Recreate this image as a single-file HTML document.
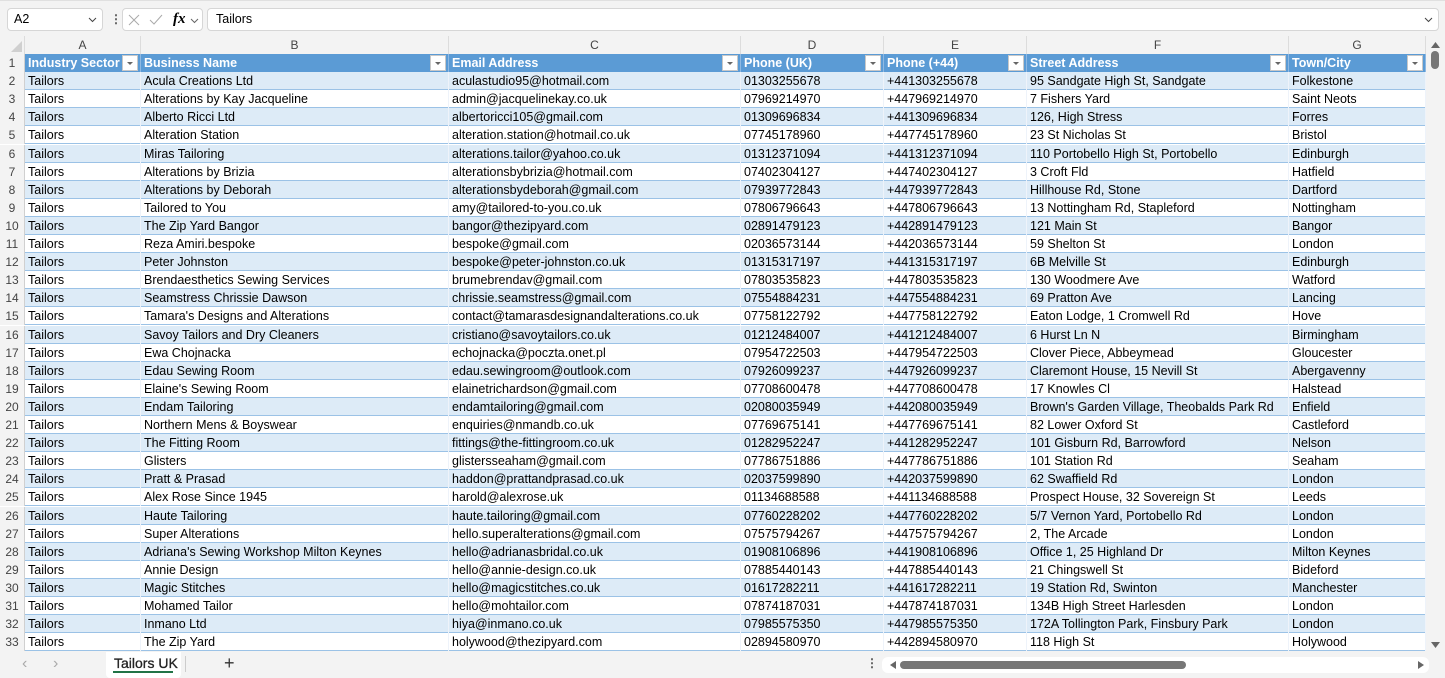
<!DOCTYPE html>
<html><head><meta charset="utf-8"><style>
*{box-sizing:border-box;margin:0;padding:0}
body{width:1445px;height:678px;overflow:hidden;background:#f3f3f3;font-family:"Liberation Sans",sans-serif;font-size:12.5px;color:#000;position:relative}
.bar{position:absolute;left:0;top:0;width:1445px;height:36px;background:#f3f3f3;border-top:1px solid #e0e0e0}
.box{position:absolute;background:#fff;border:1px solid #d6d6d6;border-radius:4px}
.colhdr{position:absolute;top:36px;left:0;width:1428px;height:18px;background:#f3f3f3}
.colhdr div{position:absolute;top:0;height:18px;text-align:center;color:#444;font-size:12px;line-height:19px;border-right:1px solid #dcdcdc}
.grid{position:absolute;left:0;top:54px;width:1426px;height:597px;background:#fff;overflow:hidden}
.r{position:absolute;left:0;width:1426px;height:18.1px;white-space:nowrap}
.r div{position:absolute;top:0;height:18.1px;line-height:19px;padding-left:3px;overflow:hidden}
.r .n{left:0;width:25px;background:#f3f3f3;color:#444;text-align:center;padding:0;font-size:12px;border-right:1px solid #d0d0d0}
.r.b{background:#ddebf7}
.r.w{background:#fff}
.r.d{border-bottom:1px solid #9bc2e6}
.r.h{background:#5b9bd5;color:#fff;font-weight:bold}
.r.h .n{font-weight:normal}
.r div.c{border-right:1px solid #eef3fa}
.r.h div.c{border-right:1px solid #8fb9e3}
.f{position:absolute;right:2px;top:1px;width:16px;height:16px;background:#fff;border:1px solid #c8c8c8}
.f:after{content:"";position:absolute;left:4px;top:6px;border-left:3px solid transparent;border-right:3px solid transparent;border-top:3px solid #666}
.A{left:25px;width:116px}.B{left:141px;width:308px}.C{left:449px;width:292px}.D{left:741px;width:143px}.E{left:884px;width:143px}.F{left:1027px;width:262px}.G{left:1289px;width:137px}
</style></head><body>
<div class="bar">
 <div class="box" style="left:7px;top:7px;width:96px;height:23px;padding:3px 0 0 6px">A2<svg style="position:absolute;right:5px;top:8px" width="9" height="6"><path d="M1 1L4.5 4.5L8 1" stroke="#444" fill="none"/></svg></div>
 <div style="position:absolute;left:110px;top:11px;color:#555;font-weight:bold;font-size:12px">⋮</div>
 <div class="box" style="left:122px;top:7px;width:81px;height:23px">
  <svg style="position:absolute;left:5px;top:5px" width="12" height="12"><path d="M1 1L11 11M11 1L1 11" stroke="#aaa"/></svg>
  <svg style="position:absolute;left:26px;top:5px" width="14" height="12"><path d="M1 6L5 10L13 1" stroke="#aaa" fill="none"/></svg>
  <i style="position:absolute;left:50px;top:2px;font-family:'Liberation Serif',serif;font-size:15px;font-weight:bold">fx</i>
  <svg style="position:absolute;left:67px;top:9px" width="9" height="6"><path d="M1 1L4.5 4.5L8 1" stroke="#666" fill="none"/></svg>
 </div>
 <div class="box" style="left:207px;top:7px;width:1232px;height:23px;padding:3px 0 0 8px">Tailors<svg style="position:absolute;right:5px;top:8px" width="9" height="6"><path d="M1 1L4.5 4.5L8 1" stroke="#444" fill="none"/></svg></div>
</div>
<div class="colhdr">
 <div style="left:0;width:25px"><svg width="25" height="18"><path d="M22 5L22 16L11 16Z" fill="#d0d0d0"/></svg></div>
 <div style="left:25px;width:116px">A</div><div style="left:141px;width:308px">B</div><div style="left:449px;width:292px">C</div><div style="left:741px;width:143px">D</div><div style="left:884px;width:143px">E</div><div style="left:1027px;width:262px">F</div><div style="left:1289px;width:137px">G</div>
</div>
<div class="grid">
<div class="r h" style="top:0"><div class="n">1</div><div class="c A">Industry Sector<span class="f"></span></div><div class="c B">Business Name<span class="f"></span></div><div class="c C">Email Address<span class="f"></span></div><div class="c D">Phone (UK)<span class="f"></span></div><div class="c E">Phone (+44)<span class="f"></span></div><div class="c F">Street Address<span class="f"></span></div><div class="c G">Town/City<span class="f"></span></div></div>
<div class="r b d" style="top:18px"><div class="n">2</div><div class="c A">Tailors</div><div class="c B">Acula Creations Ltd</div><div class="c C">aculastudio95@hotmail.com</div><div class="c D">01303255678</div><div class="c E">+441303255678</div><div class="c F">95 Sandgate High St, Sandgate</div><div class="c G">Folkestone</div></div>
<div class="r w d" style="top:36px"><div class="n">3</div><div class="c A">Tailors</div><div class="c B">Alterations by Kay Jacqueline</div><div class="c C">admin@jacquelinekay.co.uk</div><div class="c D">07969214970</div><div class="c E">+447969214970</div><div class="c F">7 Fishers Yard</div><div class="c G">Saint Neots</div></div>
<div class="r b d" style="top:54px"><div class="n">4</div><div class="c A">Tailors</div><div class="c B">Alberto Ricci Ltd</div><div class="c C">albertoricci105@gmail.com</div><div class="c D">01309696834</div><div class="c E">+441309696834</div><div class="c F">126, High Stress</div><div class="c G">Forres</div></div>
<div class="r w d" style="top:72px"><div class="n">5</div><div class="c A">Tailors</div><div class="c B">Alteration Station</div><div class="c C">alteration.station@hotmail.co.uk</div><div class="c D">07745178960</div><div class="c E">+447745178960</div><div class="c F">23 St Nicholas St</div><div class="c G">Bristol</div></div>
<div class="r b d" style="top:90.5px"><div class="n">6</div><div class="c A">Tailors</div><div class="c B">Miras Tailoring</div><div class="c C">alterations.tailor@yahoo.co.uk</div><div class="c D">01312371094</div><div class="c E">+441312371094</div><div class="c F">110 Portobello High St, Portobello</div><div class="c G">Edinburgh</div></div>
<div class="r w d" style="top:108.6px"><div class="n">7</div><div class="c A">Tailors</div><div class="c B">Alterations by Brizia</div><div class="c C">alterationsbybrizia@hotmail.com</div><div class="c D">07402304127</div><div class="c E">+447402304127</div><div class="c F">3 Croft Fld</div><div class="c G">Hatfield</div></div>
<div class="r b d" style="top:126.7px"><div class="n">8</div><div class="c A">Tailors</div><div class="c B">Alterations by Deborah</div><div class="c C">alterationsbydeborah@gmail.com</div><div class="c D">07939772843</div><div class="c E">+447939772843</div><div class="c F">Hillhouse Rd, Stone</div><div class="c G">Dartford</div></div>
<div class="r w d" style="top:144.8px"><div class="n">9</div><div class="c A">Tailors</div><div class="c B">Tailored to You</div><div class="c C">amy@tailored-to-you.co.uk</div><div class="c D">07806796643</div><div class="c E">+447806796643</div><div class="c F">13 Nottingham Rd, Stapleford</div><div class="c G">Nottingham</div></div>
<div class="r b d" style="top:162.9px"><div class="n">10</div><div class="c A">Tailors</div><div class="c B">The Zip Yard Bangor</div><div class="c C">bangor@thezipyard.com</div><div class="c D">02891479123</div><div class="c E">+442891479123</div><div class="c F">121 Main St</div><div class="c G">Bangor</div></div>
<div class="r w d" style="top:181px"><div class="n">11</div><div class="c A">Tailors</div><div class="c B">Reza Amiri.bespoke</div><div class="c C">bespoke@gmail.com</div><div class="c D">02036573144</div><div class="c E">+442036573144</div><div class="c F">59 Shelton St</div><div class="c G">London</div></div>
<div class="r b d" style="top:199.1px"><div class="n">12</div><div class="c A">Tailors</div><div class="c B">Peter Johnston</div><div class="c C">bespoke@peter-johnston.co.uk</div><div class="c D">01315317197</div><div class="c E">+441315317197</div><div class="c F">6B Melville St</div><div class="c G">Edinburgh</div></div>
<div class="r w d" style="top:217.2px"><div class="n">13</div><div class="c A">Tailors</div><div class="c B">Brendaesthetics Sewing Services</div><div class="c C">brumebrendav@gmail.com</div><div class="c D">07803535823</div><div class="c E">+447803535823</div><div class="c F">130 Woodmere Ave</div><div class="c G">Watford</div></div>
<div class="r b d" style="top:235.3px"><div class="n">14</div><div class="c A">Tailors</div><div class="c B">Seamstress Chrissie Dawson</div><div class="c C">chrissie.seamstress@gmail.com</div><div class="c D">07554884231</div><div class="c E">+447554884231</div><div class="c F">69 Pratton Ave</div><div class="c G">Lancing</div></div>
<div class="r w d" style="top:253.4px"><div class="n">15</div><div class="c A">Tailors</div><div class="c B">Tamara's Designs and Alterations</div><div class="c C">contact@tamarasdesignandalterations.co.uk</div><div class="c D">07758122792</div><div class="c E">+447758122792</div><div class="c F">Eaton Lodge, 1 Cromwell Rd</div><div class="c G">Hove</div></div>
<div class="r b d" style="top:271.5px"><div class="n">16</div><div class="c A">Tailors</div><div class="c B">Savoy Tailors and Dry Cleaners</div><div class="c C">cristiano@savoytailors.co.uk</div><div class="c D">01212484007</div><div class="c E">+441212484007</div><div class="c F">6 Hurst Ln N</div><div class="c G">Birmingham</div></div>
<div class="r w d" style="top:289.6px"><div class="n">17</div><div class="c A">Tailors</div><div class="c B">Ewa Chojnacka</div><div class="c C">echojnacka@poczta.onet.pl</div><div class="c D">07954722503</div><div class="c E">+447954722503</div><div class="c F">Clover Piece, Abbeymead</div><div class="c G">Gloucester</div></div>
<div class="r b d" style="top:307.7px"><div class="n">18</div><div class="c A">Tailors</div><div class="c B">Edau Sewing Room</div><div class="c C">edau.sewingroom@outlook.com</div><div class="c D">07926099237</div><div class="c E">+447926099237</div><div class="c F">Claremont House, 15 Nevill St</div><div class="c G">Abergavenny</div></div>
<div class="r w d" style="top:325.8px"><div class="n">19</div><div class="c A">Tailors</div><div class="c B">Elaine's Sewing Room</div><div class="c C">elainetrichardson@gmail.com</div><div class="c D">07708600478</div><div class="c E">+447708600478</div><div class="c F">17 Knowles Cl</div><div class="c G">Halstead</div></div>
<div class="r b d" style="top:343.9px"><div class="n">20</div><div class="c A">Tailors</div><div class="c B">Endam Tailoring</div><div class="c C">endamtailoring@gmail.com</div><div class="c D">02080035949</div><div class="c E">+442080035949</div><div class="c F">Brown's Garden Village, Theobalds Park Rd</div><div class="c G">Enfield</div></div>
<div class="r w d" style="top:362px"><div class="n">21</div><div class="c A">Tailors</div><div class="c B">Northern Mens &amp; Boyswear</div><div class="c C">enquiries@nmandb.co.uk</div><div class="c D">07769675141</div><div class="c E">+447769675141</div><div class="c F">82 Lower Oxford St</div><div class="c G">Castleford</div></div>
<div class="r b d" style="top:380.1px"><div class="n">22</div><div class="c A">Tailors</div><div class="c B">The Fitting Room</div><div class="c C">fittings@the-fittingroom.co.uk</div><div class="c D">01282952247</div><div class="c E">+441282952247</div><div class="c F">101 Gisburn Rd, Barrowford</div><div class="c G">Nelson</div></div>
<div class="r w d" style="top:398.2px"><div class="n">23</div><div class="c A">Tailors</div><div class="c B">Glisters</div><div class="c C">glistersseaham@gmail.com</div><div class="c D">07786751886</div><div class="c E">+447786751886</div><div class="c F">101 Station Rd</div><div class="c G">Seaham</div></div>
<div class="r b d" style="top:416.3px"><div class="n">24</div><div class="c A">Tailors</div><div class="c B">Pratt &amp; Prasad</div><div class="c C">haddon@prattandprasad.co.uk</div><div class="c D">02037599890</div><div class="c E">+442037599890</div><div class="c F">62 Swaffield Rd</div><div class="c G">London</div></div>
<div class="r w d" style="top:434.4px"><div class="n">25</div><div class="c A">Tailors</div><div class="c B">Alex Rose Since 1945</div><div class="c C">harold@alexrose.uk</div><div class="c D">01134688588</div><div class="c E">+441134688588</div><div class="c F">Prospect House, 32 Sovereign St</div><div class="c G">Leeds</div></div>
<div class="r b d" style="top:452.5px"><div class="n">26</div><div class="c A">Tailors</div><div class="c B">Haute Tailoring</div><div class="c C">haute.tailoring@gmail.com</div><div class="c D">07760228202</div><div class="c E">+447760228202</div><div class="c F">5/7 Vernon Yard, Portobello Rd</div><div class="c G">London</div></div>
<div class="r w d" style="top:470.6px"><div class="n">27</div><div class="c A">Tailors</div><div class="c B">Super Alterations</div><div class="c C">hello.superalterations@gmail.com</div><div class="c D">07575794267</div><div class="c E">+447575794267</div><div class="c F">2, The Arcade</div><div class="c G">London</div></div>
<div class="r b d" style="top:488.7px"><div class="n">28</div><div class="c A">Tailors</div><div class="c B">Adriana's Sewing Workshop Milton Keynes</div><div class="c C">hello@adrianasbridal.co.uk</div><div class="c D">01908106896</div><div class="c E">+441908106896</div><div class="c F">Office 1, 25 Highland Dr</div><div class="c G">Milton Keynes</div></div>
<div class="r w d" style="top:506.8px"><div class="n">29</div><div class="c A">Tailors</div><div class="c B">Annie Design</div><div class="c C">hello@annie-design.co.uk</div><div class="c D">07885440143</div><div class="c E">+447885440143</div><div class="c F">21 Chingswell St</div><div class="c G">Bideford</div></div>
<div class="r b d" style="top:524.9px"><div class="n">30</div><div class="c A">Tailors</div><div class="c B">Magic Stitches</div><div class="c C">hello@magicstitches.co.uk</div><div class="c D">01617282211</div><div class="c E">+441617282211</div><div class="c F">19 Station Rd, Swinton</div><div class="c G">Manchester</div></div>
<div class="r w d" style="top:543px"><div class="n">31</div><div class="c A">Tailors</div><div class="c B">Mohamed Tailor</div><div class="c C">hello@mohtailor.com</div><div class="c D">07874187031</div><div class="c E">+447874187031</div><div class="c F">134B High Street Harlesden</div><div class="c G">London</div></div>
<div class="r b d" style="top:561.1px"><div class="n">32</div><div class="c A">Tailors</div><div class="c B">Inmano Ltd</div><div class="c C">hiya@inmano.co.uk</div><div class="c D">07985575350</div><div class="c E">+447985575350</div><div class="c F">172A Tollington Park, Finsbury Park</div><div class="c G">London</div></div>
<div class="r w d" style="top:579.2px"><div class="n">33</div><div class="c A">Tailors</div><div class="c B">The Zip Yard</div><div class="c C">holywood@thezipyard.com</div><div class="c D">02894580970</div><div class="c E">+442894580970</div><div class="c F">118 High St</div><div class="c G">Holywood</div></div>
</div>
<div style="position:absolute;left:1426px;top:36px;width:19px;height:616px;background:#f3f3f3">
 <svg style="position:absolute;left:5px;top:6px" width="9" height="7"><path d="M0 6L4.5 0L9 6Z" fill="#666"/></svg>
 <div style="position:absolute;left:5px;top:15px;width:8px;height:18px;border-radius:4px;background:#777"></div>
 <svg style="position:absolute;left:5px;top:606px" width="9" height="7"><path d="M0 0L4.5 6L9 0Z" fill="#666"/></svg>
</div>
<div style="position:absolute;left:0;top:652px;width:1445px;height:26px;background:#f3f3f3">
 <span style="position:absolute;left:22px;top:3px;color:#aaa;font-size:16px">&lsaquo;</span>
 <span style="position:absolute;left:53px;top:3px;color:#aaa;font-size:16px">&rsaquo;</span>
 <div style="position:absolute;left:106px;top:0;width:75px;height:26px;background:#fff;border-radius:0 0 4px 4px;font-size:14px;padding:3px 0 0 8px;color:#222;-webkit-text-stroke:0.3px #222">Tailors UK<div style="position:absolute;left:7px;top:19px;width:60px;height:2px;background:#217346"></div></div>
 <div style="position:absolute;left:185px;top:4px;width:1px;height:16px;background:#ccc"></div>
 <span style="position:absolute;left:224px;top:1px;font-size:18px;color:#333">+</span>
 <span style="position:absolute;left:866px;top:4px;font-size:12px;color:#555;font-weight:bold">⋮</span>
 <div style="position:absolute;left:882px;top:5px;width:547px;height:16px;background:#fff;border-radius:6px">
  <svg style="position:absolute;left:8px;top:4px" width="6" height="8"><path d="M6 0L0 4L6 8Z" fill="#666"/></svg>
  <div style="position:absolute;left:18px;top:4px;width:286px;height:8px;background:#777;border-radius:4px"></div>
  <svg style="position:absolute;left:536px;top:4px" width="6" height="8"><path d="M0 0L6 4L0 8Z" fill="#666"/></svg>
 </div>
</div>
</body></html>
